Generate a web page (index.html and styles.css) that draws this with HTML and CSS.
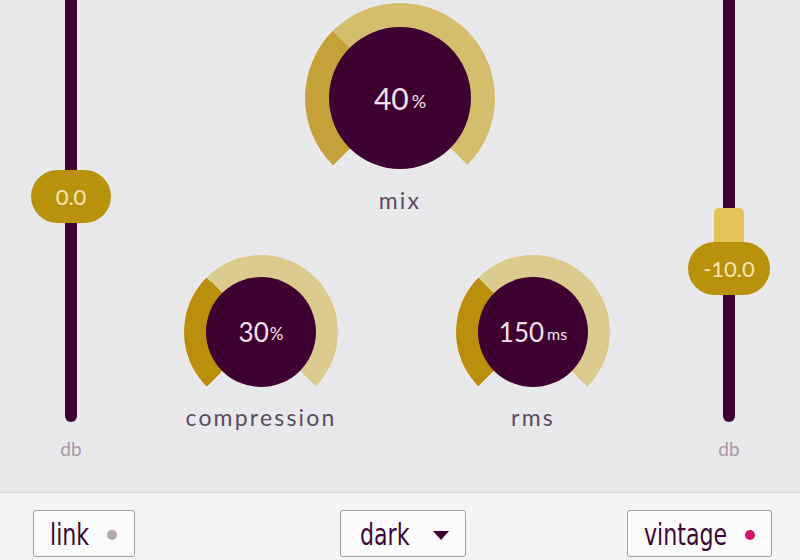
FILE: index.html
```html
<!DOCTYPE html>
<html>
<head>
<meta charset="utf-8">
<link rel="stylesheet" href="styles.css">
</head>
<body>
<div class="app">
  <div class="main">
    <div class="slider-col">
      <div class="track">
        <div class="thumb thumb-left">0.0</div>
      </div>
      <div class="db">db</div>
    </div>
    <div class="center">
      <div class="knob knob-big">
        <div class="face face-big"><span class="num num-big">40</span><span class="unit unit-big">%</span></div>
      </div>
      <div class="label label-mix">mix</div>
      <div class="row">
        <div class="knob-block">
          <div class="knob knob-small">
            <div class="face face-small"><span class="num num-small">30</span><span class="unit unit-small">%</span></div>
          </div>
          <div class="label label-small">compression</div>
        </div>
        <div class="knob-block">
          <div class="knob knob-small">
            <div class="face face-small"><span class="num num-small">150</span><span class="unit unit-ms">ms</span></div>
          </div>
          <div class="label label-small">rms</div>
        </div>
      </div>
    </div>
    <div class="slider-col">
      <div class="track">
        <div class="cap"></div>
        <div class="thumb thumb-right">-10.0</div>
      </div>
      <div class="db">db</div>
    </div>
  </div>
  <div class="bar">
    <div class="btn btn-link"><span class="btn-text">link</span><span class="dot dot-grey"></span></div>
    <div class="btn btn-dark"><span class="btn-text">dark</span><span class="caret"></span></div>
    <div class="btn btn-vintage"><span class="btn-text">vintage</span><span class="dot dot-pink"></span></div>
  </div>
</div>
</body>
</html>
```
FILE: styles.css
```css
* { box-sizing: border-box; }
html, body { margin: 0; padding: 0; }
body {
  width: 800px;
  height: 560px;
  overflow: hidden;
  font-family: Lato, "Noto Sans", sans-serif;
  background: #e9e9eb;
}
.app { width: 800px; height: 560px; display: flex; flex-direction: column; }
.main {
  height: 492px;
  display: flex;
  background: #e9e9eb;
}
.slider-col {
  width: 142px;
  display: flex;
  flex-direction: column;
  align-items: center;
}
.track {
  position: relative;
  width: 12px;
  height: 422px;
  background: #3d0030;
  border-radius: 0 0 6px 6px;
}
.thumb {
  position: absolute;
  left: 50%;
  width: 82px;
  height: 53px;
  margin-left: -41px;
  border-radius: 27px;
  background: #b8910d;
  color: #f6e8b4;
  font-size: 22px;
  display: flex;
  align-items: center;
  justify-content: center;
}
.thumb-left { top: 170px; margin-left: -40px; width: 80px; }
.thumb-right { top: 242px; }
.cap {
  position: absolute;
  left: 50%;
  top: 208px;
  width: 30px;
  height: 40px;
  margin-left: -15px;
  background: #e2c357;
  border-radius: 5px 5px 0 0;
}
.db {
  margin-top: 16px;
  font-size: 19px;
  line-height: 22px;
  color: #a797a6;
}
.center {
  flex: 1;
  display: flex;
  flex-direction: column;
  align-items: center;
}
.knob {
  border-radius: 50%;
  display: flex;
  align-items: center;
  justify-content: center;
}
.knob-big {
  margin-top: 3px;
  width: 190px;
  height: 190px;
  background: conic-gradient(from 225deg, #c5a239 0deg 90deg, #d5bd6e 90deg 270deg, transparent 270deg 360deg);
}
.knob-small {
  width: 154px;
  height: 154px;
  background: conic-gradient(from 225deg, #b98f0b 0deg 90deg, #dccb8f 90deg 270deg, transparent 270deg 360deg);
}
.face {
  border-radius: 50%;
  background: #3d0030;
  color: #f3e0ef;
  display: flex;
  align-items: center;
  justify-content: center;
}
.face-big { width: 142px; height: 142px; }
.face-small { width: 110px; height: 110px; }
.num-big { font-size: 30px; }
.unit-big { font-size: 18px; margin-left: 3px; margin-top: 5px; }
.num-small { font-size: 26px; }
.unit-small { font-size: 17px; margin-left: 1px; margin-top: 3px; }
.unit-ms { font-size: 16px; margin-left: 3px; margin-top: 3px; }
.label {
  font-size: 23px;
  line-height: 26px;
  color: #5c4a5e;
  letter-spacing: 2.2px;
}
.label-mix { margin-top: -6px; }
.row {
  margin-top: 42px;
  display: flex;
  gap: 118px;
  padding-right: 6px;
}
.knob-block {
  display: flex;
  flex-direction: column;
  align-items: center;
  width: 154px;
}
.label-small { margin-top: -5px; white-space: nowrap; }
.bar {
  flex: 1;
  background: #f4f4f6;
  border-top: 1px solid #dedee1;
  display: grid;
  grid-template-columns: 1fr auto 1fr;
  align-items: start;
  padding: 17px 28px 0 33px;
}
.btn {
  height: 47px;
  background: #fbfbfc;
  border: 1.5px solid #a99ca7;
  border-radius: 3px;
  display: flex;
  align-items: center;
  padding: 3px 16px 0 16px;
  color: #3d0a35;
}
.btn-link { justify-self: start; width: 102px; }
.btn-dark { justify-self: center; width: 126px; padding-left: 19px; }
.btn-vintage { justify-self: end; width: 145px; }
.btn-text {
  display: inline-block;
  font-family: "DejaVu Sans Condensed", "DejaVu Sans", sans-serif;
  font-size: 30px;
  line-height: 1;
  transform: scaleX(0.82);
  transform-origin: left center;
}
.dot {
  width: 10px;
  height: 10px;
  border-radius: 50%;
  margin-left: auto;
  margin-right: 1px;
  flex: none;
}
.dot-grey { background: #b2a3b0; }
.dot-pink { background: #d8106b; }
.caret {
  flex: none;
  margin-left: auto;
  width: 0;
  height: 0;
  border-left: 8px solid transparent;
  border-right: 8px solid transparent;
  border-top: 9px solid #3d0030;
}
```
